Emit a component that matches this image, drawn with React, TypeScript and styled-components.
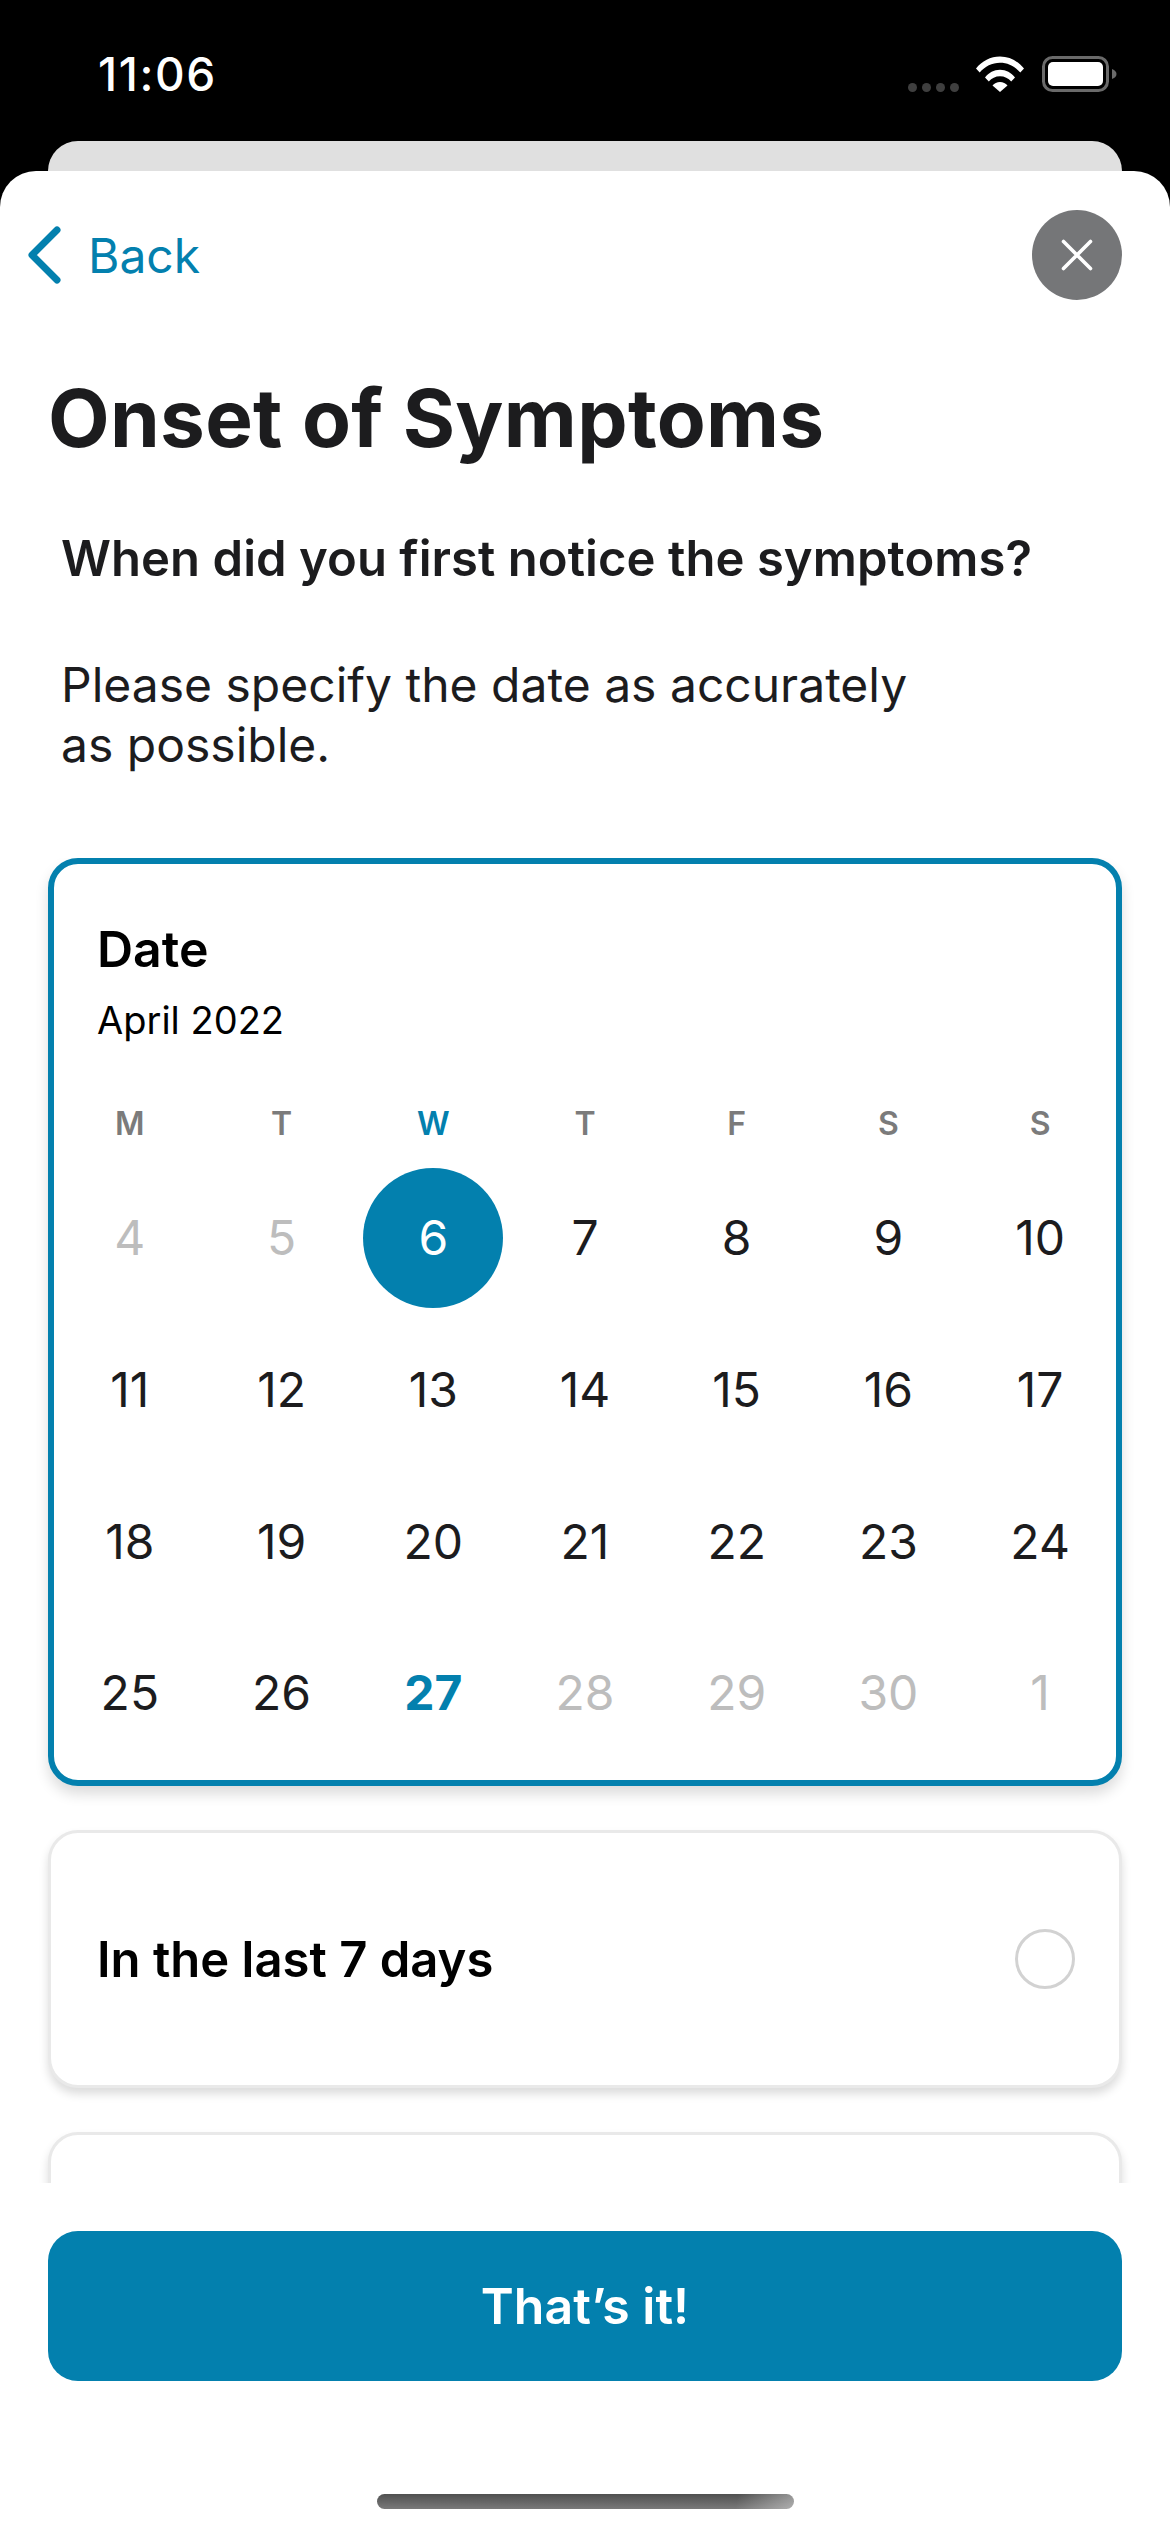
import React from "react";
import styled, { createGlobalStyle } from "styled-components";

const BLUE = "#0380ae";

const GlobalStyle = createGlobalStyle`
  html, body {
    margin: 0;
    padding: 0;
    background: #000;
  }
  * {
    box-sizing: border-box;
  }
  #root {
    font-family: Inter, "Liberation Sans", sans-serif;
  }
`;

const Page = styled.div`
  width: 1170px;
  height: 2532px;
  display: flex;
  flex-direction: column;
  overflow: hidden;
  background: #000;
`;

const StatusBar = styled.div`
  height: 141px;
  flex-shrink: 0;
  display: flex;
  justify-content: space-between;
  align-items: flex-start;
  padding: 48px 53px 0 98px;
`;

const Time = styled.div`
  color: #fff;
  font-size: 46px;
  line-height: 52px;
  font-weight: 500;
  letter-spacing: 1.6px;
`;

const StatusIcons = styled.div`
  display: flex;
  align-items: flex-start;
  padding-top: 8px;
`;

const SignalDots = styled.div`
  display: flex;
  gap: 5px;
  margin: 27px 17px 0 0;
`;

const SignalDot = styled.span`
  width: 9px;
  height: 9px;
  border-radius: 50%;
  background: #3f3f3f;
`;

const BackSheet = styled.div`
  height: 30px;
  flex-shrink: 0;
  margin: 0 48px;
  background: #e0e0e0;
  border-radius: 30px 30px 0 0;
`;

const Sheet = styled.div`
  flex: 1;
  display: flex;
  flex-direction: column;
  background: #fff;
  border-radius: 36px 36px 0 0;
`;

const NavRow = styled.div`
  height: 90px;
  flex-shrink: 0;
  margin-top: 39px;
  padding: 0 48px 0 26px;
  display: flex;
  justify-content: space-between;
  align-items: center;
`;

const BackLink = styled.div`
  display: flex;
  align-items: center;
  gap: 26px;
  color: ${BLUE};
  font-size: 48px;
  font-weight: 400;
`;

const CloseButton = styled.div`
  width: 90px;
  height: 90px;
  border-radius: 50%;
  background: #757678;
  display: flex;
  align-items: center;
  justify-content: center;
`;

const Title = styled.h1`
  margin: 70px 0 0 48px;
  font-size: 80px;
  line-height: 96px;
  font-weight: 700;
  letter-spacing: 0.3px;
  color: #1c1c1e;
`;

const Question = styled.p`
  margin: 63px 0 0 61px;
  font-size: 49px;
  line-height: 60px;
  font-weight: 600;
  letter-spacing: 0.05px;
  color: #1c1c1e;
`;

const Hint = styled.p`
  margin: 66px 0 0 61px;
  width: 900px;
  font-size: 48px;
  line-height: 60px;
  font-weight: 400;
  color: #1c1c1e;
`;

const ScrollArea = styled.div`
  margin-top: 83px;
  height: 1325px;
  flex-shrink: 0;
  overflow: hidden;
  padding: 0 48px;
  display: flex;
  flex-direction: column;
  gap: 44px;
`;

const CalendarCard = styled.div`
  height: 928px;
  flex-shrink: 0;
  border: 6px solid ${BLUE};
  border-radius: 30px;
  background: #fff;
  box-shadow: 0 8px 14px rgba(0, 0, 0, 0.14);
  padding-top: 55px;
`;

const CardTitle = styled.div`
  margin-left: 43px;
  font-size: 50px;
  line-height: 60px;
  font-weight: 600;
  color: #000;
`;

const MonthLabel = styled.div`
  margin: 18px 0 0 43px;
  font-size: 38px;
  line-height: 46px;
  color: #000;
`;

const WeekRow = styled.div`
  display: grid;
  grid-template-columns: repeat(7, 1fr);
  margin-top: 61px;
`;

const WeekDay = styled.div<{ $active?: boolean }>`
  text-align: center;
  font-size: 32px;
  line-height: 40px;
  font-weight: 600;
  color: ${(p) => (p.$active ? BLUE : "#7b7b7b")};
`;

const DayGrid = styled.div`
  display: grid;
  grid-template-columns: repeat(7, 1fr);
  grid-auto-rows: 151.7px;
  margin-top: 18px;
`;

const DayCell = styled.div`
  display: flex;
  align-items: center;
  justify-content: center;
`;

type DayKind = "muted" | "normal" | "selected" | "today";

const DayNumber = styled.div<{ $kind: DayKind }>`
  width: 140px;
  height: 140px;
  border-radius: 50%;
  display: flex;
  align-items: center;
  justify-content: center;
  font-size: 48px;
  font-weight: ${(p) => (p.$kind === "today" ? 700 : 400)};
  background: ${(p) => (p.$kind === "selected" ? BLUE : "transparent")};
  color: ${(p) =>
    p.$kind === "selected"
      ? "#fff"
      : p.$kind === "today"
      ? BLUE
      : p.$kind === "muted"
      ? "#bdbdbd"
      : "#1c1c1e"};
`;

const OptionCard = styled.div`
  height: 258px;
  flex-shrink: 0;
  border: 3px solid #e9e9e9;
  border-radius: 30px;
  background: #fff;
  box-shadow: 0 6px 10px rgba(0, 0, 0, 0.14);
  padding: 0 44px 0 46px;
  display: flex;
  align-items: center;
  justify-content: space-between;
`;

const OptionLabel = styled.div`
  font-size: 49px;
  font-weight: 600;
  color: #000;
`;

const Radio = styled.div`
  width: 60px;
  height: 60px;
  border-radius: 50%;
  border: 3px solid #d2d2d2;
`;

const Footer = styled.div`
  padding: 48px 48px 0;
  display: flex;
  flex-direction: column;
  align-items: center;
`;

const PrimaryButton = styled.div`
  width: 100%;
  height: 150px;
  border-radius: 30px;
  background: ${BLUE};
  color: #fff;
  font-size: 50px;
  font-weight: 600;
  display: flex;
  align-items: center;
  justify-content: center;
`;

const HomeIndicator = styled.div`
  width: 417px;
  height: 15px;
  margin-top: 113px;
  border-radius: 8px;
  background: linear-gradient(100deg, transparent 86%, rgba(255, 255, 255, 0.4) 100%),
    linear-gradient(180deg, #505050 0%, #7a7a7a 100%);
`;

const WEEK = ["M", "T", "W", "T", "F", "S", "S"];

const DAYS: { n: number; kind: DayKind }[] = [
  { n: 4, kind: "muted" },
  { n: 5, kind: "muted" },
  { n: 6, kind: "selected" },
  ...[7, 8, 9, 10, 11, 12, 13, 14, 15, 16, 17, 18, 19, 20, 21, 22, 23, 24, 25, 26].map((n) => ({
    n,
    kind: "normal" as DayKind,
  })),
  { n: 27, kind: "today" },
  { n: 28, kind: "muted" },
  { n: 29, kind: "muted" },
  { n: 30, kind: "muted" },
  { n: 1, kind: "muted" },
];

function WifiIcon() {
  return (
    <svg width="48" height="36" viewBox="0 0 48 36" style={{ marginRight: 18 }}>
      <path d="M0 12.5C6 5 14.5 0.5 24 0.5S42 5 48 12.5L44.3 16.6C39 10.4 32 6.8 24 6.8S9 10.4 3.7 16.6Z" fill="#fff" />
      <path d="M9 21.5C12.7 16.8 18 13.8 24 13.8S35.3 16.8 39 21.5L35.2 25.6C32.4 22.2 28.5 20.2 24 20.2S15.6 22.2 12.8 25.6Z" fill="#fff" />
      <path d="M16.5 29.5C18.4 27.3 21 26 24 26S29.6 27.3 31.5 29.5L24 36Z" fill="#fff" />
    </svg>
  );
}

function BatteryIcon() {
  return (
    <svg width="75" height="36" viewBox="0 0 75 36">
      <rect x="1.5" y="1.5" width="64" height="33" rx="9" fill="none" stroke="#6a6a6a" strokeWidth="3" />
      <rect x="6" y="6" width="55" height="24" rx="5" fill="#fff" />
      <path d="M70 13C73 14 74.5 16 74.5 18S73 22 70 23Z" fill="#6a6a6a" />
    </svg>
  );
}

function BackChevron() {
  return (
    <svg width="36" height="60" viewBox="0 0 36 60">
      <path d="M31 5L6 30L31 55" fill="none" stroke={BLUE} strokeWidth="7" strokeLinecap="round" strokeLinejoin="round" />
    </svg>
  );
}

function CloseIcon() {
  return (
    <svg width="32" height="32" viewBox="0 0 32 32">
      <path d="M2.5 2.5L29.5 29.5M29.5 2.5L2.5 29.5" stroke="#fff" strokeWidth="3.6" strokeLinecap="round" />
    </svg>
  );
}

export default function App() {
  return (
    <Page>
      <GlobalStyle />
      <StatusBar>
        <Time>11:06</Time>
        <StatusIcons>
          <SignalDots>
            <SignalDot />
            <SignalDot />
            <SignalDot />
            <SignalDot />
          </SignalDots>
          <WifiIcon />
          <BatteryIcon />
        </StatusIcons>
      </StatusBar>
      <BackSheet />
      <Sheet>
        <NavRow>
          <BackLink>
            <BackChevron />
            Back
          </BackLink>
          <CloseButton>
            <CloseIcon />
          </CloseButton>
        </NavRow>
        <Title>Onset of Symptoms</Title>
        <Question>When did you first notice the symptoms?</Question>
        <Hint>Please specify the date as accurately as possible.</Hint>
        <ScrollArea>
          <CalendarCard>
            <CardTitle>Date</CardTitle>
            <MonthLabel>April 2022</MonthLabel>
            <WeekRow>
              {WEEK.map((d, i) => (
                <WeekDay key={i} $active={i === 2}>
                  {d}
                </WeekDay>
              ))}
            </WeekRow>
            <DayGrid>
              {DAYS.map((d, i) => (
                <DayCell key={i}>
                  <DayNumber $kind={d.kind}>{d.n}</DayNumber>
                </DayCell>
              ))}
            </DayGrid>
          </CalendarCard>
          <OptionCard>
            <OptionLabel>In the last 7 days</OptionLabel>
            <Radio />
          </OptionCard>
          <OptionCard />
        </ScrollArea>
        <Footer>
          <PrimaryButton>That’s it!</PrimaryButton>
          <HomeIndicator />
        </Footer>
      </Sheet>
    </Page>
  );
}
